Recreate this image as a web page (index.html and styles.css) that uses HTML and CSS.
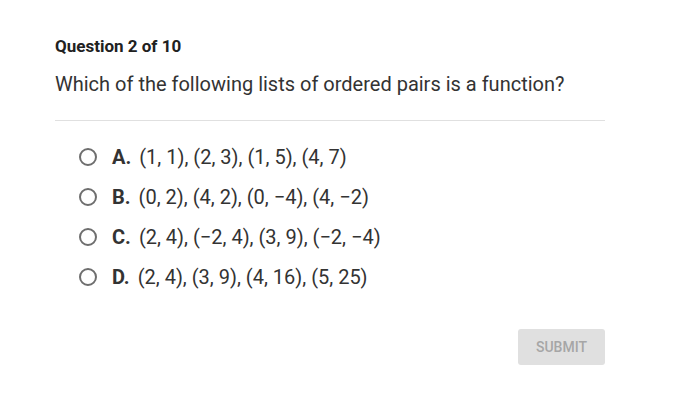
FILE: index.html
```html
<!DOCTYPE html>
<html>
<head>
<meta charset="utf-8">
<link rel="stylesheet" href="styles.css">
</head>
<body>
<div class="quiz">
  <div class="qnum">Question 2 of 10</div>
  <div class="qtext">Which of the following lists of ordered pairs is a function?</div>
  <div class="divider"></div>
  <div class="options">
    <label class="opt"><span class="radio"></span><span class="letter">A.</span><span class="ans">(1, 1), (2, 3), (1, 5), (4, 7)</span></label>
    <label class="opt"><span class="radio"></span><span class="letter">B.</span><span class="ans">(0, 2), (4, 2), (0, −4), (4, −2)</span></label>
    <label class="opt"><span class="radio"></span><span class="letter">C.</span><span class="ans">(2, 4), (−2, 4), (3, 9), (−2, −4)</span></label>
    <label class="opt"><span class="radio"></span><span class="letter">D.</span><span class="ans">(2, 4), (3, 9), (4, 16), (5, 25)</span></label>
  </div>
  <div class="actions">
    <button class="submit">SUBMIT</button>
  </div>
</div>
</body>
</html>
```
FILE: styles.css
```css
html, body {
  margin: 0;
  padding: 0;
  background: #ffffff;
}
body {
  font-family: Roboto, "Noto Sans", sans-serif;
  color: #212121;
}
.quiz {
  width: 550px;
  margin-left: 55px;
  padding-top: 36px;
}
.qnum {
  font-size: 17px;
  font-weight: 700;
  line-height: 20px;
  color: #212121;
}
.qtext {
  margin-top: 16px;
  font-size: 20px;
  line-height: 24px;
  color: #333333;
}
.divider {
  margin-top: 24px;
  height: 1px;
  background: #e0e0e0;
}
.options {
  margin-top: 24px;
  padding-left: 24px;
  display: flex;
  flex-direction: column;
  gap: 16px;
}
.opt {
  display: flex;
  align-items: center;
  height: 24px;
  font-size: 20px;
  color: #333333;
}
.radio {
  width: 14px;
  height: 14px;
  border: 2px solid #6e6e6e;
  border-radius: 50%;
  margin-right: 15px;
  flex: none;
}
.letter {
  font-weight: 700;
  margin-right: 8px;
}
.actions {
  display: flex;
  justify-content: flex-end;
  margin-top: 40px;
}
.submit {
  width: 87px;
  height: 36px;
  border: none;
  border-radius: 3px;
  background: #e0e0e0;
  color: #a6a6a6;
  font-family: Roboto, sans-serif;
  font-size: 14px;
  font-weight: 500;
}
```
